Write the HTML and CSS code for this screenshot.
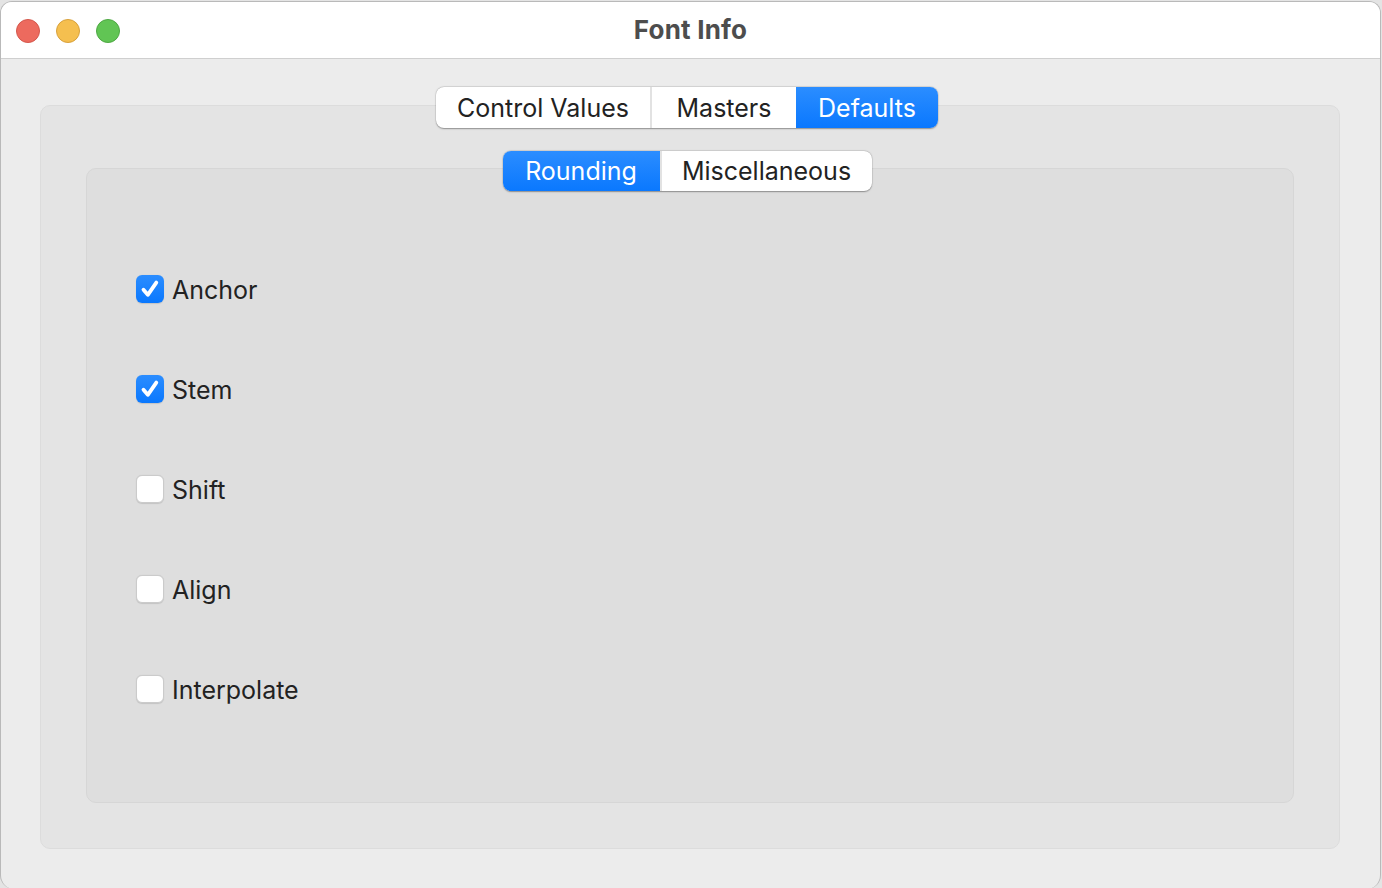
FILE: index.html
```html
<!DOCTYPE html>
<html>
<head>
<meta charset="utf-8">
<link rel="stylesheet" href="styles.css">
</head>
<body>
<div class="window">
  <div class="titlebar">
    <div class="lights">
      <span class="light red"></span>
      <span class="light yellow"></span>
      <span class="light green"></span>
    </div>
    <div class="title">Font Info</div>
  </div>
  <div class="content">
    <div class="seg seg-outer">
      <div class="seg-item w-cv">Control Values</div>
      <div class="seg-item w-ms">Masters</div>
      <div class="seg-item w-df active">Defaults</div>
    </div>
    <div class="box-outer">
      <div class="seg seg-inner">
        <div class="seg-item w-rd active">Rounding</div>
        <div class="seg-item w-mc">Miscellaneous</div>
      </div>
      <div class="box-inner">
        <label class="row"><span class="cb checked"><svg viewBox="0 0 28 28" width="28" height="28"><path d="M7.5 14.8 L11.8 19.8 L20.3 7.6" fill="none" stroke="#fff" stroke-width="3.8" stroke-linecap="round" stroke-linejoin="round"/></svg></span><span class="lbl">Anchor</span></label>
        <label class="row"><span class="cb checked"><svg viewBox="0 0 28 28" width="28" height="28"><path d="M7.5 14.8 L11.8 19.8 L20.3 7.6" fill="none" stroke="#fff" stroke-width="3.8" stroke-linecap="round" stroke-linejoin="round"/></svg></span><span class="lbl">Stem</span></label>
        <label class="row"><span class="cb"></span><span class="lbl">Shift</span></label>
        <label class="row"><span class="cb"></span><span class="lbl">Align</span></label>
        <label class="row"><span class="cb"></span><span class="lbl">Interpolate</span></label>
      </div>
    </div>
  </div>
</div>
</body>
</html>
```
FILE: styles.css
```css
html, body {
  margin: 0;
  padding: 0;
  width: 1382px;
  height: 888px;
  overflow: hidden;
  background: #e4e4e4;
  font-family: Inter, "Open Sans", "Liberation Sans", sans-serif;
}
.window {
  box-sizing: border-box;
  width: 1381px;
  height: 888px;
  margin-top: 1px;
  border: 1px solid #b9b9b9;
  border-bottom: none;
  border-radius: 12px 12px 14px 14px;
  background: #ececec;
  overflow: hidden;
  display: flex;
  flex-direction: column;
}
.titlebar {
  height: 56px;
  flex: none;
  background: #ffffff;
  border-bottom: 1px solid #cfcfcf;
  display: flex;
  align-items: center;
  position: relative;
}
.lights {
  display: flex;
  gap: 16px;
  padding-left: 15px;
  padding-top: 1px;
}
.light {
  width: 24px;
  height: 24px;
  border-radius: 50%;
  box-sizing: border-box;
}
.red { background: #ed6a5e; border: 1px solid #d4574c; }
.yellow { background: #f5bf4f; border: 1px solid #d8a13c; }
.green { background: #61c554; border: 1px solid #4ea843; }
.title {
  position: absolute;
  left: 0;
  right: 0;
  top: 12px;
  text-align: center;
  font-weight: 700;
  font-size: 26px;
  color: #4d4d4d;
  letter-spacing: 0.2px;
}
.content {
  flex: 1;
  display: flex;
  flex-direction: column;
  align-items: center;
  padding: 28px 40px 40px 39px;
}
.seg {
  display: flex;
  background: #ffffff;
  border-radius: 8px;
  box-shadow: 0 0.5px 1.5px rgba(0,0,0,0.35), 0 0 0 0.5px rgba(0,0,0,0.08);
  position: relative;
  z-index: 1;
  overflow: hidden;
}
.seg-outer {
  height: 41px;
  margin-bottom: -23px;
  margin-left: -6px;
}
.seg-inner {
  height: 40px;
  margin-bottom: -23px;
  margin-left: -6px;
}
.seg-item {
  display: flex;
  align-items: center;
  justify-content: center;
  font-size: 25px;
  color: #222222;
  box-sizing: border-box;
  border-left: 2px solid #e2e2e2;
}
.seg-item:first-child { border-left: none; }
.seg-item.active {
  color: #ffffff;
  background: linear-gradient(#2b8dff, #0a78fe);
  border-left: none;
}
.w-cv { width: 214px; }
.w-ms { width: 146px; }
.w-df { width: 142px; }
.w-rd { width: 157px; }
.w-mc { width: 212px; }
.box-outer {
  align-self: stretch;
  flex: 1;
  background: #e4e4e4;
  border: 1px solid #dcdcdc;
  border-radius: 10px;
  display: flex;
  flex-direction: column;
  align-items: center;
  padding: 45px 45px 45px 45px;
}
.box-inner {
  align-self: stretch;
  flex: 1;
  background: #dedede;
  border: 1px solid #d6d6d6;
  border-radius: 10px;
  display: flex;
  flex-direction: column;
  gap: 72px;
  padding: 106px 0 0 49px;
}
.row {
  display: flex;
  align-items: center;
  height: 28px;
  gap: 8px;
}
.cb {
  width: 28px;
  height: 28px;
  box-sizing: border-box;
  border-radius: 6px;
  background: #ffffff;
  border: 1px solid #cbcbcb;
  box-shadow: 0 0.5px 1px rgba(0,0,0,0.12);
  display: flex;
}
.cb.checked {
  border: none;
  background: linear-gradient(#2b8dff, #0a78fe);
}
.lbl {
  font-size: 25px;
  color: #222222;
  position: relative;
  top: 1px;
}
```
